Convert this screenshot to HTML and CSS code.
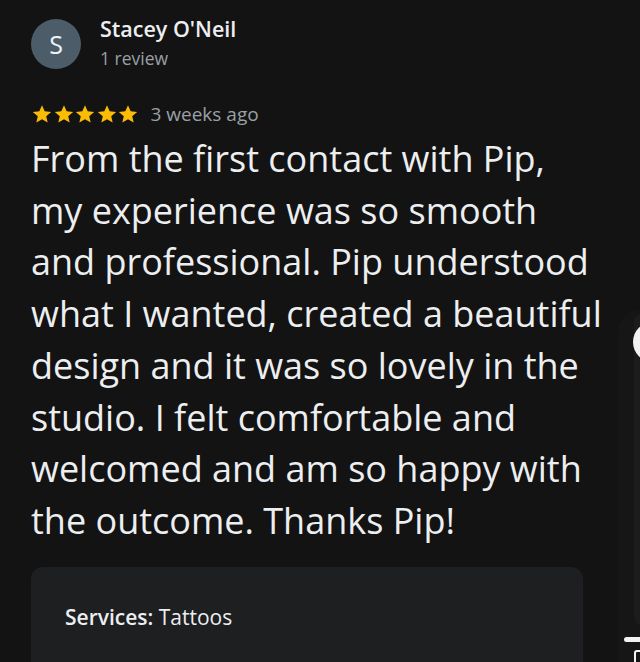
FILE: index.html
```html
<!DOCTYPE html>
<html>
<head>
<meta charset="utf-8">
<link rel="stylesheet" href="styles.css">
</head>
<body>
<div class="review">
  <div class="header">
    <div class="avatar">S</div>
    <div class="who">
      <div class="name">Stacey O'Neil</div>
      <div class="count">1 review</div>
    </div>
  </div>
  <div class="meta">
    <div class="stars">
      <svg viewBox="0 0 24 24" class="star"><path d="M12 2.5l2.9 6.6 7.1.6-5.4 4.7 1.6 7-6.2-3.7-6.2 3.7 1.6-7L2 9.7l7.1-.6z"/></svg>
      <svg viewBox="0 0 24 24" class="star"><path d="M12 2.5l2.9 6.6 7.1.6-5.4 4.7 1.6 7-6.2-3.7-6.2 3.7 1.6-7L2 9.7l7.1-.6z"/></svg>
      <svg viewBox="0 0 24 24" class="star"><path d="M12 2.5l2.9 6.6 7.1.6-5.4 4.7 1.6 7-6.2-3.7-6.2 3.7 1.6-7L2 9.7l7.1-.6z"/></svg>
      <svg viewBox="0 0 24 24" class="star"><path d="M12 2.5l2.9 6.6 7.1.6-5.4 4.7 1.6 7-6.2-3.7-6.2 3.7 1.6-7L2 9.7l7.1-.6z"/></svg>
      <svg viewBox="0 0 24 24" class="star"><path d="M12 2.5l2.9 6.6 7.1.6-5.4 4.7 1.6 7-6.2-3.7-6.2 3.7 1.6-7L2 9.7l7.1-.6z"/></svg>
    </div>
    <span class="ago">3 weeks ago</span>
  </div>
  <p class="text">From the first contact with Pip,<br>my experience was so smooth<br>and professional. Pip understood<br>what I wanted, created a beautiful<br>design and it was so lovely in the<br>studio. I felt comfortable and<br>welcomed and am so happy with<br>the outcome. Thanks Pip!</p>
  <div class="services"><span class="label">Services:</span> Tattoos</div>
</div>
<div class="peek">
  <div class="peek-panel"></div>
  <div class="peek-dot"></div>
  <div class="peek-bar"></div>
  <div class="peek-box"></div>
</div>
</body>
</html>
```
FILE: styles.css
```css
html, body {
  margin: 0;
  padding: 0;
  background: #131313;
  width: 640px;
  height: 662px;
  overflow: hidden;
  font-family: "Open Sans", "Liberation Sans", sans-serif;
}
body {
  position: relative;
}
.review {
  padding: 19px 0 0 31px;
  width: 580px;
}
.header {
  display: flex;
  align-items: flex-start;
  gap: 19px;
  height: 50px;
}
.avatar {
  width: 50px;
  height: 50px;
  border-radius: 50%;
  background: #4c5d69;
  color: #f1f3f4;
  font-size: 25px;
  display: flex;
  align-items: center;
  justify-content: center;
  flex: none;
}
.name {
  color: #eceef0;
  font-size: 21.5px;
  font-weight: 600;
  line-height: 24px;
  margin-top: -2px;
}
.count {
  color: #9aa0a6;
  font-size: 17.5px;
  line-height: 22px;
  margin-top: 6px;
}
.meta {
  display: flex;
  align-items: center;
  margin-top: 33px;
  height: 24px;
}
.stars {
  display: flex;
}
.star {
  width: 22px;
  height: 22px;
  fill: #fbbc04;
  margin-right: -0.5px;
}
.ago {
  color: #9aa0a6;
  font-size: 19px;
  margin-left: 12px;
}
.text {
  margin: 7px 0 0;
  color: #eceef0;
  font-size: 36px;
  line-height: 51.7px;
  white-space: nowrap;
}
.services {
  margin-top: 20px;
  width: 552px;
  height: 140px;
  background: #1e1f21;
  border-radius: 12px;
  box-sizing: border-box;
  padding: 36px 34px;
  color: #eceef0;
  font-size: 21px;
}
.label {
  font-weight: 600;
}
.peek {
  position: absolute;
  left: 618px;
  top: 310px;
  width: 22px;
  height: 352px;
  border-radius: 26px 0 0 0;
  background: #161616;
  overflow: hidden;
}
.peek-panel {
  position: absolute;
  left: 16px;
  top: 4px;
  width: 30px;
  height: 311px;
  border-radius: 8px 0 0 8px;
  background: #1c1c1c;
}
.peek-dot {
  position: absolute;
  left: 15px;
  top: 12px;
  width: 40px;
  height: 40px;
  border-radius: 50%;
  background: #f1f3f4;
}
.peek-bar {
  position: absolute;
  left: 6px;
  top: 327px;
  width: 30px;
  height: 5px;
  border-radius: 3px;
  background: #f1f3f4;
}
.peek-box {
  position: absolute;
  left: 16px;
  top: 340px;
  width: 30px;
  height: 40px;
  border-radius: 3px;
  border: 2px solid #f1f3f4;
}
```
